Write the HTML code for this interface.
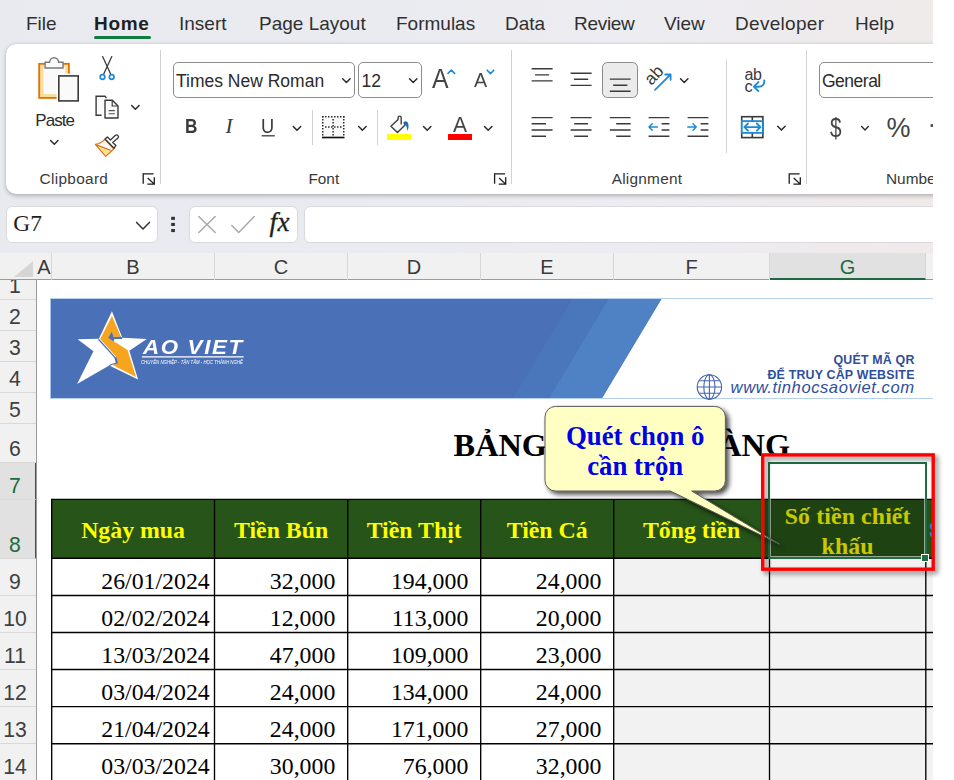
<!DOCTYPE html>
<html lang="vi">
<head>
<meta charset="utf-8">
<title>Excel</title>
<style>
*{box-sizing:border-box;margin:0;padding:0}
html,body{width:954px;height:780px;background:#fff;overflow:hidden}
body{font-family:"Liberation Sans",sans-serif;color:#242424;position:relative}
#app{position:absolute;left:0;top:0;width:933px;height:780px;overflow:hidden;background:#fff}
.abs{position:absolute}
.t{position:absolute;white-space:nowrap;line-height:1}
/* top */
#topbg{left:0;top:0;width:933px;height:253px;background:linear-gradient(90deg,#e8eaf0 0%,#ececf1 70%,#f0eaea 100%)}
#fbg{display:none}
#ribbon{left:6px;top:44px;width:960px;height:149.5px;background:#fff;border-radius:10px 0 0 10px;box-shadow:0 1.5px 4px rgba(0,0,0,.24),0 0 1px rgba(0,0,0,.16)}
.tab{font-size:19px;top:13.9px;color:#303030}
.vsep{position:absolute;width:1px;background:#d2d2d2}
.glabel{font-size:15.4px;color:#3a3a3a;top:171px;width:120px;text-align:center}
.box{position:absolute;background:#fff;border:1px solid #8c8c8c;border-radius:5px}
svg{position:absolute;overflow:visible}
/* sheet */
#colhdr{left:0;top:253px;width:933px;height:27px;background:#f1f1f1;border-bottom:1px solid #9b9b9b}
#rowhdr{left:0;top:280px;width:37px;height:500px;background:#f1f1f1;border-right:1px solid #9b9b9b;overflow:hidden}
.ch{position:absolute;top:0;height:27px;font-size:20px;line-height:28px;text-align:center;color:#3a3a3a;border-right:1px solid #d6d6d6}
.rh{position:absolute;left:0;width:36px;font-size:21.2px;color:#3f3f3f;text-align:center;border-bottom:1px solid #d9d9d9}
.rh span{position:absolute;left:0;width:30px;bottom:2.7px;line-height:1;text-align:center}
.rh.sel{background:#e1e1e1;color:#1d6b3d;border-right:2px solid #1d6b3d;width:37px}
.hd{font-size:23.8px;font-weight:bold;color:#ffff00;text-align:center;white-space:nowrap}
.dt{font-size:23.8px;color:#000}
.serif{font-family:"Liberation Serif",serif}
</style>
</head>
<body>
<div id="app">
<div id="topbg" class="abs"></div>
<div id="fbg" class="abs"></div>

<!-- tabs -->
<div class="t tab" style="left:26px">File</div>
<div class="t tab" style="left:94px;font-weight:bold;color:#1f1f1f;letter-spacing:.7px">Home</div>
<div class="abs" style="left:94px;top:35.5px;width:57px;height:3px;border-radius:2px;background:#107c41"></div>
<div class="t tab" style="left:179px">Insert</div>
<div class="t tab" style="left:259px">Page Layout</div>
<div class="t tab" style="left:396px">Formulas</div>
<div class="t tab" style="left:505px">Data</div>
<div class="t tab" style="left:574px;letter-spacing:-.3px">Review</div>
<div class="t tab" style="left:664px">View</div>
<div class="t tab" style="left:735px;letter-spacing:.3px">Developer</div>
<div class="t tab" style="left:855px">Help</div>

<div id="ribbon" class="abs"></div>
<svg width="0" height="0" style="position:absolute"><defs>
<path id="chev" d="M-3.7,-1.9 L0,1.9 L3.7,-1.9" fill="none" stroke="#2b2b2b" stroke-width="1.5" stroke-linecap="round" stroke-linejoin="round"/>
<g id="launch" fill="none" stroke="#1c1c1c" stroke-width="1.3"><path d="M0,9.8 V0 H10.4"/><path d="M4.5,4.1 L10.8,10 M11.1,3.4 V10.3 H4.2"/></g>
</defs></svg>

<!-- Clipboard group -->
<svg class="abs" style="left:0;top:0" width="933" height="200" viewBox="0 0 933 200">
 <!-- paste -->
 <rect x="39.2" y="63.8" width="29.7" height="34.1" fill="#f9dc98" stroke="#e07206" stroke-width="1.8"/>
 <rect x="43.3" y="66.5" width="22" height="27.6" fill="#fafafa"/>
 <path d="M45.1,68 V62.2 H49.6 A4.5,4.5 0 0 1 58.6,62.2 H63 V68 Z" fill="#fafafa" stroke="#7a7876" stroke-width="1.4"/>
 <rect x="56.6" y="73.7" width="24" height="29" fill="#fff"/>
 <rect x="58.8" y="75.9" width="19.4" height="25" fill="#fafafa" stroke="#3b3a39" stroke-width="1.6"/>
 <use href="#chev" x="54.3" y="142.4"/>
 <!-- cut -->
 <path d="M102.6,56.6 L110.8,74.2 M111.8,56.6 L103.6,74.2" stroke="#3b3a39" stroke-width="1.3" fill="none" stroke-linecap="round"/>
 <circle cx="102.5" cy="77" r="2.3" fill="#fff" stroke="#1e8ad6" stroke-width="1.7"/>
 <circle cx="111.7" cy="77" r="2.3" fill="#fff" stroke="#1e8ad6" stroke-width="1.7"/>
 <!-- copy -->
 <path d="M101.6,115.2 H96.1 V96.2 H105 L106.5,98" fill="#fafafa" stroke="#3b3a39" stroke-width="1.4"/>
 <path d="M105,100.2 H112.4 L118,106 V118 H105 Z" fill="#fafafa" stroke="#3b3a39" stroke-width="1.4" stroke-linejoin="round"/>
 <path d="M112.2,100.4 V106 H117.8" fill="none" stroke="#3b3a39" stroke-width="1.2"/>
 <path d="M108.6,110.6 H114.8 M108.6,113.8 H114.8" stroke="#555" stroke-width="1.1"/>
 <use href="#chev" x="135.4" y="107.4"/>
 <!-- format painter -->
 <path d="M104.8,139.3 C102.4,142.2 99.4,143.6 95.4,144.4 L105.5,156.2 L113.8,148.9 Z" fill="#fafafa" stroke="#e27204" stroke-width="1.3" stroke-linejoin="round"/>
 <path d="M99.6,147.2 L110.2,151.2 L105.5,155.4 Z" fill="#fadf8e"/>
 <path d="M96.4,144.8 L110.6,150.4" fill="none" stroke="#e27204" stroke-width="1.3"/>
 <path d="M105.1,139 L107.4,136.9 L110.5,140 L115.2,135.6 A1.8,1.8 0 0 1 118,138 L112.7,142.6 L115.9,145.4 L114,148.3 Z" fill="#fff" stroke="#3b3a39" stroke-width="1.35" stroke-linejoin="round"/>
 <use href="#launch" x="143.2" y="173.9"/>
</svg>
<div class="t" style="left:35.2px;top:111.8px;font-size:17px;letter-spacing:-.9px;color:#2b2b2b">Paste</div>
<div class="t glabel" style="left:13.9px;letter-spacing:.3px">Clipboard</div>
<div class="vsep" style="left:160px;top:50px;height:134px"></div>
<!-- Font group -->
<div class="box" style="left:173px;top:62px;width:182px;height:36px"></div>
<div class="t" style="left:176px;top:72.6px;font-size:17.5px;letter-spacing:0px;color:#2b2b2b">Times New Roman</div>
<div class="box" style="left:358px;top:62px;width:64px;height:36px"></div>
<div class="t" style="left:361.5px;top:72.9px;font-size:17.5px;color:#2b2b2b">12</div>
<div class="t" style="left:432.2px;top:64.6px;font-size:27.6px;color:#444;transform:scaleX(.9);transform-origin:0 0">A</div>
<div class="t" style="left:473.8px;top:70.2px;font-size:20.8px;color:#444;transform:scaleX(.95);transform-origin:0 0">A</div>
<div class="t" style="left:185px;top:117.3px;font-size:19.8px;font-weight:bold;color:#3b3a39;transform:scaleX(.87);transform-origin:0 0">B</div>
<div class="t serif" style="left:225.5px;top:116.2px;font-size:21.4px;font-style:italic;color:#3b3a39">I</div>
<div class="t" style="left:261px;top:117.4px;font-size:19.8px;color:#3b3a39;transform:scaleX(.92);transform-origin:0 0">U</div>
<div class="t" style="left:452.8px;top:113.7px;font-size:22.2px;color:#444;transform:scaleX(.95);transform-origin:0 0">A</div>
<svg class="abs" style="left:0;top:0" width="933" height="200" viewBox="0 0 933 200">
 <use href="#chev" x="346.4" y="80.6"/>
 <use href="#chev" x="413.2" y="80.6"/>
 <path d="M448,73.4 L451.3,70 L454.6,73.4" fill="none" stroke="#1e8ad6" stroke-width="1.6" stroke-linecap="round" stroke-linejoin="round"/>
 <path d="M487.2,70.2 L490.5,73.6 L493.8,70.2" fill="none" stroke="#1e8ad6" stroke-width="1.6" stroke-linecap="round" stroke-linejoin="round"/>
 <path d="M261.6,135.8 H274.8" stroke="#3b3a39" stroke-width="1.3"/>
 <use href="#chev" x="297" y="128.4"/>
 <!-- borders -->
 <rect x="323" y="117" width="20.6" height="19" fill="#fafafa"/>
 <g stroke="#2b2b2b" stroke-width="1.5" fill="none" stroke-dasharray="1.5 1.5">
  <path d="M322,116.7 H344.6"/><path d="M322.76,116 V135.6"/><path d="M343.76,116 V135.6"/><path d="M333.1,119 V135.6"/><path d="M325,127.1 H341.6"/>
 </g>
 <path d="M322,137.5 H344.5" stroke="#111" stroke-width="1.7"/>
 <use href="#chev" x="362.4" y="128.4"/>
 <!-- fill -->
 <path d="M401.2,124.4 V117.6 A1.55,1.55 0 0 0 398.1,117.6 V119.4 L390.9,126.3 L397.5,132.6 L405.5,124.6 L403.6,122.6" fill="#fafafa" stroke="#3b3a39" stroke-width="1.35" stroke-linejoin="round" stroke-linecap="butt"/>
 <path d="M403.6,122.4 C404.6,120.6 407.4,120.8 408.2,123.4 C409,126.2 408.4,128.8 407.4,131 C407.2,128.4 406.6,126.4 405.4,124.6 Z" fill="#1a6fc4"/>
 <rect x="387" y="134" width="24" height="6" fill="#ffff00"/>
 <use href="#chev" x="427.2" y="128.4"/>
 <rect x="448" y="134" width="24" height="6" fill="#ff0000"/>
 <use href="#chev" x="488.2" y="128.4"/>
 <use href="#launch" x="494.6" y="173.9"/>
</svg>
<div class="vsep" style="left:312px;top:110px;height:35px"></div>
<div class="vsep" style="left:377px;top:110px;height:35px"></div>
<div class="t glabel" style="left:263.8px">Font</div>
<div class="vsep" style="left:511px;top:50px;height:134px"></div>
<!-- Alignment group -->
<div class="abs" style="left:602px;top:62px;width:36px;height:36px;background:#ebebeb;border:1px solid #8a8a8a;border-radius:5.5px"></div>
<svg class="abs" style="left:0;top:0" width="933" height="200" viewBox="0 0 933 200">
 <g stroke="#3b3a39" stroke-width="1.4" fill="none">
  <path d="M531.6,68.8 H552.6 M535,74.9 H549.2 M531.6,80.9 H552.6"/>
  <path d="M570.6,73.2 H591.6 M574,79.3 H588.2 M570.6,85.4 H591.6"/>
  <path d="M609.8,79.1 H630.6 M613.2,85.2 H627.4 M609.8,91.3 H630.6"/>
  <path d="M531.6,117.6 H552.6 M531.6,123.8 H546 M531.6,130 H552.6 M531.6,136.2 H546"/>
  <path d="M570.6,117.6 H591.6 M574.2,123.8 H588 M570.6,130 H591.6 M574.2,136.2 H588"/>
  <path d="M609.8,117.6 H630.6 M616.2,123.8 H630.6 M609.8,130 H630.6 M616.2,136.2 H630.6"/>
  <path d="M648.6,117.6 H669.4 M661.6,123.8 H669.4 M661.6,130 H669.4 M648.6,136.2 H669.4"/>
  <path d="M687.6,117.6 H708.4 M700.6,123.8 H708.4 M700.6,130 H708.4 M687.6,136.2 H708.4"/>
 </g>
 <g stroke="#1e8ad6" stroke-width="1.5" fill="none" stroke-linecap="round" stroke-linejoin="round">
  <path d="M649,127 H657.4 M652.2,123.8 L649,127 L652.2,130.2"/>
  <path d="M687.8,127 H696.2 M693,123.8 L696.2,127 L693,130.2"/>
  <path d="M655,89.8 L670.4,74.6 M665.2,74.5 H670.6 V79.8" stroke-width="1.8"/>
  <!-- wrap arrow -->
  <path d="M764.2,80.4 C764.7,84.6 762.2,86.7 758.4,86.7 H754.4 M758.4,82.1 L753.8,86.6 L758.4,91.1" stroke-width="1.9"/>
 </g>
 <use href="#chev" x="684.2" y="80.6"/>
 <!-- merge icon -->
 <g stroke="#3b3a39" stroke-width="1.6" fill="#fff"><rect x="741.7" y="116.7" width="21.2" height="20.9"/><path d="M752.3,116.7 V121 M752.3,133 V137.6"/></g>
 <rect x="741.8" y="121.1" width="21" height="11.8" fill="#fafafa" stroke="#1e8ad2" stroke-width="1.8"/>
 <path d="M744.8,127.1 H760 M748,123.5 L744.4,127.1 L748,130.7 M756.8,123.5 L760.4,127.1 L756.8,130.7" stroke="#1e8ad2" stroke-width="1.8" fill="none" stroke-linecap="round" stroke-linejoin="round"/>
 <use href="#chev" x="781.4" y="128.2"/>
 <use href="#launch" x="789.2" y="173.9"/>
 <use href="#chev" x="865" y="128.2" transform="translate(865 128.2) scale(.9) translate(-865 -128.2)"/>
 <rect x="930.6" y="124" width="3" height="3" fill="#555"/>
</svg>
<div class="t" style="left:654.2px;top:71px;font-size:17.4px;color:#3b3a39;transform:rotate(-47deg);transform-origin:0 100%">ab</div>
<div class="t" style="left:744.4px;top:67px;font-size:16px;color:#3b3a39;letter-spacing:-.3px">ab</div>
<div class="t" style="left:744.6px;top:77.6px;font-size:16.4px;color:#3b3a39">c</div>
<div class="vsep" style="left:725.5px;top:60px;height:93px"></div>
<div class="t glabel" style="left:587.0px;letter-spacing:.25px">Alignment</div>
<div class="vsep" style="left:806px;top:50px;height:134px"></div>
<!-- Number group -->
<div class="box" style="left:819px;top:62px;width:140px;height:36px"></div>
<div class="t" style="left:822px;top:73px;font-size:17.5px;letter-spacing:-.5px;color:#2b2b2b">General</div>
<div class="t" style="left:830.2px;top:113.6px;font-size:28px;color:#444;transform:scaleX(.74);transform-origin:0 0">$</div>
<div class="t" style="left:886.4px;top:115.2px;font-size:27px;color:#444;transform:scaleX(1);transform-origin:0 0">%</div>
<div class="t glabel" style="left:886px;width:auto;text-align:left">Number</div>


<!-- Formula bar -->
<div class="abs" style="left:6px;top:206px;width:151.5px;height:36.6px;background:#fff;border:1px solid #d9d9de;border-radius:6px"></div>
<div class="t serif" style="left:13.3px;top:212px;font-size:23.4px;color:#1f1f1f">G7</div>
<div class="abs" style="left:188.5px;top:206px;width:109px;height:36.6px;background:#fff;border:1px solid #d9d9de;border-radius:6px"></div>
<div class="abs" style="left:304px;top:206px;width:660px;height:36.6px;background:#fff;border:1px solid #d9d9de;border-radius:6px"></div>
<svg class="abs" style="left:0;top:195px" width="933" height="60" viewBox="0 195 933 60">
 <path d="M136.6,222.4 L143,229 L149.4,222.4" fill="none" stroke="#333" stroke-width="1.5" stroke-linecap="round" stroke-linejoin="round"/>
 <rect x="171.2" y="216.8" width="3.7" height="3.1" fill="#333"/><rect x="171.2" y="222.9" width="3.7" height="3.1" fill="#333"/><rect x="171.2" y="229" width="3.7" height="3.1" fill="#333"/>
 <path d="M198.8,216.6 L215.2,232.6 M215.2,216.6 L198.8,232.6" stroke="#a6a6a6" stroke-width="1.4" fill="none" stroke-linecap="round"/>
 <path d="M231.8,225.6 L238.8,232.4 L254.2,216.4" stroke="#a6a6a6" stroke-width="1.4" fill="none" stroke-linecap="round" stroke-linejoin="round"/>
</svg>
<div class="t serif" style="left:269.4px;top:208.8px;font-size:27px;font-style:italic;color:#1f1f1f;letter-spacing:.6px;-webkit-text-stroke:.35px #1f1f1f">fx</div>


<!-- column headers -->
<div id="colhdr" class="abs">
 <div class="ch" style="left:0;width:37px;border-right:0"></div>
 <div class="ch" style="left:37px;width:15px">A</div>
 <div class="ch" style="left:52px;width:163px">B</div>
 <div class="ch" style="left:215px;width:133px">C</div>
 <div class="ch" style="left:348px;width:133px">D</div>
 <div class="ch" style="left:481px;width:133px">E</div>
 <div class="ch" style="left:614px;width:156px">F</div>
 <div class="ch" style="left:770px;width:156px;background:#e1e1e1;color:#1d6b3d;border-bottom:2px solid #1d6b3d;height:27px">G</div>
 <div class="ch" style="left:926px;width:20px;border-right:0"></div>
 <svg style="left:10px;top:7px" width="24" height="18"><path d="M23,1 V17 H4 Z" fill="#d5d5d5"/></svg>
</div>
<!-- row headers -->
<div id="rowhdr" class="abs">
 <div class="rh" style="top:0;height:19.5px"><span>1</span></div>
 <div class="rh" style="top:19.5px;height:31px"><span>2</span></div>
 <div class="rh" style="top:50.5px;height:31px"><span>3</span></div>
 <div class="rh" style="top:81.5px;height:31px"><span>4</span></div>
 <div class="rh" style="top:112.5px;height:31px"><span>5</span></div>
 <div class="rh" style="top:143.5px;height:39.5px"><span>6</span></div>
 <div class="rh sel" style="top:183px;height:36.5px"><span>7</span></div>
 <div class="rh sel" style="top:219.5px;height:59px"><span>8</span></div>
 <div class="rh" style="top:278.5px;height:37px"><span>9</span></div>
 <div class="rh" style="top:315.5px;height:37px"><span>10</span></div>
 <div class="rh" style="top:352.5px;height:37px"><span>11</span></div>
 <div class="rh" style="top:389.5px;height:37.2px"><span>12</span></div>
 <div class="rh" style="top:426.7px;height:37px"><span>13</span></div>
 <div class="rh" style="top:463.7px;height:37px"><span>14</span></div>
</div>
<!-- banner -->
<div class="abs" style="left:50px;top:298px;width:890px;height:101px;background:#fff;overflow:hidden;border-top:1px solid #b5d1ec;border-bottom:1px solid #b5d1ec;border-left:1px solid #a9c3e6">
 <svg style="left:0;top:0" width="890" height="100" viewBox="51 299 890 100">
  <path d="M50,298 H662 L600.9,400 H50 Z" fill="#4a71b8"/>
  <path d="M573,298 H609 L548,400 H512 Z" fill="#4a76bc"/>
  <path d="M609,298 H662 L600.9,400 H548 Z" fill="#4f81c5"/>
  <!-- star logo -->
  <g transform="translate(70 305) scale(0.10893)">
   <path d="M385,58 L480,300 L705,312 L545,420 L625,685 L360,555 L65,725 L215,425 L70,315 L265,310 Z" fill="#fff"/>
   <path d="M385,102 L466,290 L402,296 L384,246 L352,300 L528,414 L606,660 L388,548 L442,536 L426,478 L278,312 Z" fill="#f7a51e"/>
   <path d="M262,314 L420,490" stroke="#4a71b8" stroke-width="12" fill="none"/>
   <path d="M402,297 L384,244 L350,301 L400,334 L408,311 L482,311 L478,298 L466,289 Z" fill="#4a71b8"/>
   <path d="M410,484 L426,476 L443,537 L388,549 L366,560 L352,553 L404,520 Z" fill="#4a71b8"/>
   <path d="M409,493 L421,531 L372,543 L345,560 L300,520 Z" fill="#fff"/>
  </g>
  <path d="M142,356.8 H243.6" stroke="#fff" stroke-width="1.3"/>
 </svg>
</div>
<div class="t" style="left:143.4px;top:336.8px;font-size:20.6px;font-weight:bold;font-style:italic;color:#fff;letter-spacing:1.5px;transform:scaleX(1.085);transform-origin:0 0">AO VIET</div>
<div class="t" style="left:141px;top:359.8px;font-size:5.3px;font-style:italic;color:#fff;letter-spacing:0;transform:scaleX(.815);transform-origin:0 0">CHUYÊN NGHIỆP - TẬN TÂM - HỌC THÀNH NGHỀ</div>
<div class="t" style="right:18.4px;top:354.4px;font-size:12.4px;font-weight:bold;color:#2f4e9c;letter-spacing:.2px">QUÉT MÃ QR</div>
<div class="t" style="right:18.4px;top:369px;font-size:12.4px;font-weight:bold;color:#2f4e9c;letter-spacing:.2px">ĐỂ TRUY CẬP WEBSITE</div>
<div class="t" style="right:18.4px;top:379.6px;font-size:16.6px;font-style:italic;color:#2f4e9c;letter-spacing:.55px">www.tinhocsaoviet.com</div>
<svg class="abs" style="left:0;top:0" width="933" height="420" viewBox="0 0 933 420"><g fill="none" stroke="#4565ad" stroke-width="1.1"><circle cx="709.4" cy="387" r="12.2"/><ellipse cx="709.4" cy="387" rx="5.6" ry="12.2"/><path d="M709.4,374.8 V399.2 M697.2,387 H721.6 M699,380.8 H719.8 M699,393.2 H719.8"/></g></svg>
<!-- title -->
<div class="t serif" style="left:453.6px;top:429px;font-size:32.3px;font-weight:bold;color:#000">BẢNG KÊ MUA HÀNG</div>
<!-- table -->
<div class="abs" style="left:51px;top:499px;width:890px;height:59.5px;background:#275418"></div>
<div class="abs" style="left:614px;top:558px;width:330px;height:230px;background:#f2f2f2"></div>
<div class="t serif hd" style="left:51.7px;width:162.8px;top:518.6px">Ngày mua</div>
<div class="t serif hd" style="left:214.5px;width:133.2px;top:518.6px">Tiền Bún</div>
<div class="t serif hd" style="left:347.7px;width:133.0px;top:518.6px">Tiền Thịt</div>
<div class="t serif hd" style="left:480.7px;width:133.0px;top:518.6px">Tiền Cá</div>
<div class="t serif hd" style="left:613.7px;width:155.8px;top:518.6px">Tổng tiền</div>
<div class="t serif hd" style="left:769.5px;width:156.3px;top:501.4px;line-height:30px;letter-spacing:.13px">Số tiền chiết<br>khấu</div>
<div class="t serif dt" style="right:723.3px;top:569.8px">26/01/2024</div>
<div class="t serif dt" style="right:597.7px;top:569.8px">32,000</div>
<div class="t serif dt" style="right:464.7px;top:569.8px">194,000</div>
<div class="t serif dt" style="right:331.7px;top:569.8px">24,000</div>
<div class="t serif dt" style="right:723.3px;top:606.8px">02/02/2024</div>
<div class="t serif dt" style="right:597.7px;top:606.8px">12,000</div>
<div class="t serif dt" style="right:464.7px;top:606.8px">113,000</div>
<div class="t serif dt" style="right:331.7px;top:606.8px">20,000</div>
<div class="t serif dt" style="right:723.3px;top:643.8px">13/03/2024</div>
<div class="t serif dt" style="right:597.7px;top:643.8px">47,000</div>
<div class="t serif dt" style="right:464.7px;top:643.8px">109,000</div>
<div class="t serif dt" style="right:331.7px;top:643.8px">23,000</div>
<div class="t serif dt" style="right:723.3px;top:680.9px">03/04/2024</div>
<div class="t serif dt" style="right:597.7px;top:680.9px">24,000</div>
<div class="t serif dt" style="right:464.7px;top:680.9px">134,000</div>
<div class="t serif dt" style="right:331.7px;top:680.9px">24,000</div>
<div class="t serif dt" style="right:723.3px;top:718.0px">21/04/2024</div>
<div class="t serif dt" style="right:597.7px;top:718.0px">24,000</div>
<div class="t serif dt" style="right:464.7px;top:718.0px">171,000</div>
<div class="t serif dt" style="right:331.7px;top:718.0px">27,000</div>
<div class="t serif dt" style="right:723.3px;top:755.1px">03/03/2024</div>
<div class="t serif dt" style="right:597.7px;top:755.1px">30,000</div>
<div class="t serif dt" style="right:464.7px;top:755.1px">76,000</div>
<div class="t serif dt" style="right:331.7px;top:755.1px">32,000</div>
<svg class="abs" style="left:0;top:0" width="933" height="780" viewBox="0 0 933 780"><path d="M51,499.4 H934 M51,558.2 H934 M51,595.5 H934 M51,632.5 H934 M51,669.5 H934 M51,706.6 H934 M51,743.7 H934 M51.7,499 V781 M214.5,499 V781 M347.7,499 V781 M480.7,499 V781 M613.7,499 V781 M769.5,499 V781 M925.8,499 V781" stroke="#000" stroke-width="1.35" fill="none"/></svg>
<!-- selection -->
<div class="abs" style="left:770.2px;top:558.6px;width:0;height:0"></div>
<div class="abs" style="left:769px;top:499.4px;width:157px;height:59px;background:rgba(0,0,0,.21)"></div>
<div class="abs" style="left:768.3px;top:461.8px;width:158.6px;height:97.4px;border:2px solid #1e6e41;box-shadow:inset 0 0 0 1px rgba(255,255,255,.55)"></div>
<div class="abs" style="left:920.8px;top:553.8px;width:8.4px;height:8.4px;background:#1e6e41;border:1px solid #fff"></div>
<svg class="abs" style="left:0;top:0" width="933" height="780" viewBox="0 0 933 780"><path d="M933,522.6 C929.8,523 928.8,526.8 930.4,528.8 L933,530.8 Z M933,531.6 L929.6,532.6 C929.6,535.8 931,537.8 933,538 Z" fill="#1e90f0"/></svg>
<!-- callout -->
<svg class="abs" style="left:0;top:0" width="933" height="780" viewBox="0 0 933 780">
 <defs>
  <linearGradient id="cg" x1="0" y1="0" x2="1" y2="0"><stop offset="0" stop-color="#ffffc4"/><stop offset="1" stop-color="#ffffc0"/></linearGradient>
  <filter id="sh" x="-10%" y="-10%" width="130%" height="140%"><feGaussianBlur in="SourceAlpha" stdDeviation="2.8"/><feOffset dx="3.4" dy="3.4"/><feComponentTransfer><feFuncA type="linear" slope=".72"/></feComponentTransfer><feMerge><feMergeNode/><feMergeNode in="SourceGraphic"/></feMerge></filter>
 </defs>
 <path filter="url(#sh)" d="M555.6,406.4 H714.8 A10.6,10.6 0 0 1 725.4,417 V480.4 A10.6,10.6 0 0 1 714.8,491 H691.7 L779.7,544.2 L670.4,491 H555.6 A10.6,10.6 0 0 1 545,480.4 V417 A10.6,10.6 0 0 1 555.6,406.4 Z" fill="url(#cg)" stroke="#5a5a5a" stroke-width="1" stroke-linejoin="round"/>
</svg>
<div class="t serif" style="left:545px;width:180.4px;top:420.5px;font-size:26.8px;line-height:30px;font-weight:bold;color:#0000e6;text-align:center;white-space:nowrap">Quét chọn ô<br>cần trộn</div>

</div>
<!-- red highlight box -->
<svg class="abs" style="left:0;top:0" width="954" height="780" viewBox="0 0 954 780">
 <defs><filter id="rs" x="-8%" y="-10%" width="120%" height="130%"><feGaussianBlur in="SourceAlpha" stdDeviation="2.6"/><feOffset dx="2.6" dy="3"/><feComponentTransfer><feFuncA type="linear" slope=".5"/></feComponentTransfer><feMerge><feMergeNode/><feMergeNode in="SourceGraphic"/></feMerge></filter></defs>
 <rect filter="url(#rs)" x="762.7" y="454.9" width="170.5" height="114.3" fill="none" stroke="#ff0000" stroke-width="3.4"/>
</svg>

</body>
</html>
